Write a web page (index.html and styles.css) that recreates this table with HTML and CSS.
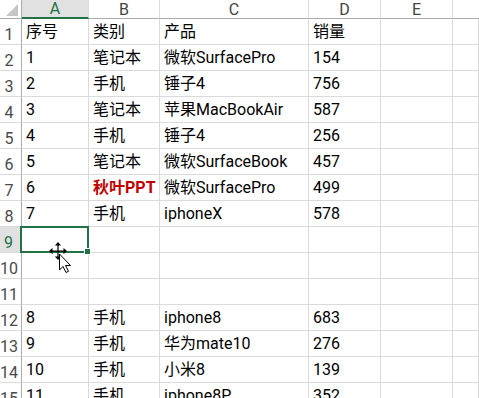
FILE: index.html
```html
<!DOCTYPE html>
<html lang="zh">
<head>
<meta charset="utf-8">
<link rel="stylesheet" href="styles.css">
</head>
<body>
<div class="sheet">
  <div class="ch corner"><span class="tri"></span></div>
  <div class="ch sel">A</div>
  <div class="ch">B</div>
  <div class="ch">C</div>
  <div class="ch">D</div>
  <div class="ch">E</div>
  <div class="ch last"></div>

  <div class="rh">1</div><div class="c">序号</div><div class="c">类别</div><div class="c">产品</div><div class="c">销量</div><div class="c"></div><div class="c"></div>
  <div class="rh">2</div><div class="c">1</div><div class="c">笔记本</div><div class="c">微软SurfacePro</div><div class="c">154</div><div class="c"></div><div class="c"></div>
  <div class="rh">3</div><div class="c">2</div><div class="c">手机</div><div class="c">锤子4</div><div class="c">756</div><div class="c"></div><div class="c"></div>
  <div class="rh">4</div><div class="c">3</div><div class="c">笔记本</div><div class="c">苹果MacBookAir</div><div class="c">587</div><div class="c"></div><div class="c"></div>
  <div class="rh">5</div><div class="c">4</div><div class="c">手机</div><div class="c">锤子4</div><div class="c">256</div><div class="c"></div><div class="c"></div>
  <div class="rh">6</div><div class="c">5</div><div class="c">笔记本</div><div class="c">微软SurfaceBook</div><div class="c">457</div><div class="c"></div><div class="c"></div>
  <div class="rh">7</div><div class="c">6</div><div class="c red">秋叶PPT</div><div class="c">微软SurfacePro</div><div class="c">499</div><div class="c"></div><div class="c"></div>
  <div class="rh">8</div><div class="c">7</div><div class="c">手机</div><div class="c">iphoneX</div><div class="c">578</div><div class="c"></div><div class="c"></div>
  <div class="rh selrow">9</div><div class="c active"><span class="selbox"></span><span class="handle"></span></div><div class="c"></div><div class="c"></div><div class="c"></div><div class="c"></div><div class="c"></div>
  <div class="rh">10</div><div class="c"></div><div class="c"></div><div class="c"></div><div class="c"></div><div class="c"></div><div class="c"></div>
  <div class="rh">11</div><div class="c"></div><div class="c"></div><div class="c"></div><div class="c"></div><div class="c"></div><div class="c"></div>
  <div class="rh">12</div><div class="c">8</div><div class="c">手机</div><div class="c">iphone8</div><div class="c">683</div><div class="c"></div><div class="c"></div>
  <div class="rh">13</div><div class="c">9</div><div class="c">手机</div><div class="c">华为mate10</div><div class="c">276</div><div class="c"></div><div class="c"></div>
  <div class="rh">14</div><div class="c">10</div><div class="c">手机</div><div class="c">小米8</div><div class="c">139</div><div class="c"></div><div class="c"></div>
  <div class="rh">15</div><div class="c">11</div><div class="c">手机</div><div class="c">iphone8P</div><div class="c">352</div><div class="c"></div><div class="c"></div>

  <svg class="cursor" width="28" height="34" viewBox="0 0 28 34">
    <g fill="#000" stroke="none">
      <rect x="5" y="10.5" width="14" height="1.2"/>
      <rect x="11.4" y="4" width="1.2" height="14"/>
      <polygon points="3,11.1 6.5,8 6.5,14.2"/>
      <polygon points="21,11.1 17.5,8 17.5,14.2"/>
      <polygon points="12,2 8.9,5.5 15.1,5.5"/>
      <polygon points="12,20 8.9,16.5 15.1,16.5"/>
    </g>
    <polygon points="13.5,14 13.5,30 17,26.5 20,32.5 22.5,31.3 19.6,25.5 24.5,25.5" fill="#fff" stroke="#000" stroke-width="1" stroke-linejoin="miter"/>
  </svg>
</div>
</body>
</html>
```

FILE: styles.css
```css
html, body {
  margin: 0;
  padding: 0;
  background: #fff;
  overflow: hidden;
}
.sheet {
  position: relative;
  display: grid;
  grid-template-columns: 22px 67px 71px 149px 72px 72px 1fr;
  grid-template-rows: 19px repeat(15, 26px);
  width: 479px;
  height: 398px;
  overflow: hidden;
  font-family: Roboto, "Noto Sans CJK SC", sans-serif;
  font-size: 16px;
  color: #000;
}
.ch {
  box-sizing: border-box;
  border-right: 1px solid #dadada;
  border-bottom: 1px solid #ababab;
  background: #fff;
  color: #444;
  font-size: 16px;
  line-height: 17px;
  display: flex;
  align-items: flex-end;
  justify-content: center;
}
.ch.corner {
  border-right: 1px solid #ababab;
  position: relative;
}
.tri {
  position: absolute;
  right: 3px;
  bottom: 2px;
  width: 12px;
  height: 12px;
  background: #c6c6c6;
  clip-path: polygon(100% 0, 100% 100%, 0 100%);
}
.ch.sel {
  background: #e1e1e1;
  color: #217346;
  border-bottom: 2px solid #217346;
}
.ch.last {
  border-right: none;
}
.rh {
  box-sizing: border-box;
  border-right: 1px solid #ababab;
  border-bottom: 1px solid #dadada;
  color: #4a4a4a;
  font-size: 16px;
  line-height: 18px;
  display: flex;
  align-items: flex-end;
  justify-content: center;
  padding-right: 3px;
  white-space: nowrap;
}
.rh.selrow {
  background: #e1e1e1;
  color: #217346;
  border-right: 2px solid #217346;
}
.c {
  box-sizing: border-box;
  border-right: 1px solid #dadada;
  border-bottom: 1px solid #dadada;
  padding: 1px 0 0 4px;
  display: flex;
  align-items: center;
  white-space: nowrap;
  line-height: 20px;
}
.c.red {
  color: #c00000;
  font-weight: bold;
}
.c.active {
  position: relative;
}
.selbox {
  position: absolute;
  left: -2px;
  top: -1px;
  width: 69px;
  height: 27px;
  box-sizing: border-box;
  border: 2px solid #217346;
}
.handle {
  position: absolute;
  left: 62px;
  top: 21px;
  width: 7px;
  height: 7px;
  box-sizing: border-box;
  background: #217346;
  border: 1px solid #fff;
}
.cursor {
  position: absolute;
  left: 46px;
  top: 240px;
}
```
